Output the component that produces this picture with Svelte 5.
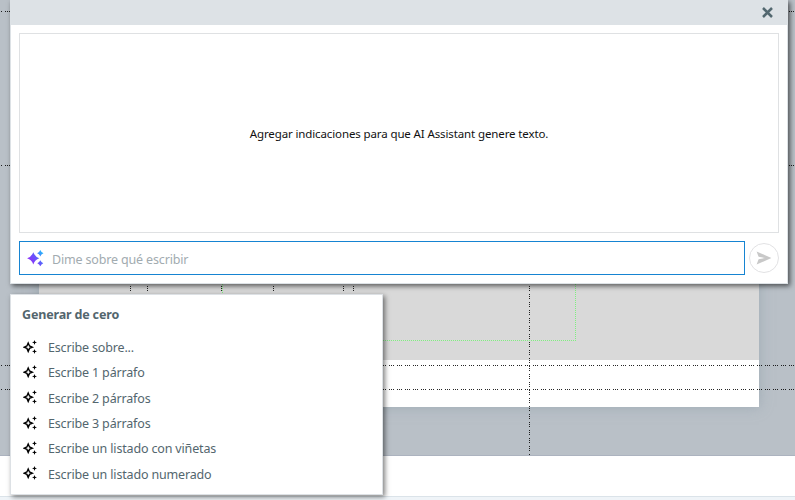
<script>
  const prompts = [
    'Escribe sobre...',
    'Escribe 1 párrafo',
    'Escribe 2 párrafos',
    'Escribe 3 párrafos',
    'Escribe un listado con viñetas',
    'Escribe un listado numerado'
  ];
  const rows = [11, 165, 365, 389];
  const columns = [130, 147, 221, 273, 343, 353];
</script>

<div class="app">
  <div class="workspace">
    <div class="page"><div class="band"></div></div>
    <div class="frame"></div>
    {#each rows as y}
      <div class="guide-h" style="top: {y}px"></div>
    {/each}
    {#each columns as x}
      <div class="guide-v short" style="left: {x}px"></div>
    {/each}
    <div class="guide-v" style="left: 529px"></div>
  </div>
  <div class="footer"></div>
  <div class="status"></div>

  <section class="dialog">
    <header>
      <svg width="11" height="11" viewBox="0 0 11 11"><path d="M1 1 10 10M10 1 1 10" stroke="#536870" stroke-width="2.5" /></svg>
    </header>
    <div class="body">
      <div class="result"><span>Agregar indicaciones para que AI Assistant genere texto.</span></div>
      <div class="entry">
        <div class="input">
          <svg width="17" height="17" viewBox="0 0 17 17">
            <defs>
              <linearGradient id="ai" gradientUnits="userSpaceOnUse" x1="2" y1="11" x2="15" y2="2">
                <stop offset="0" stop-color="#9030f8" />
                <stop offset=".5" stop-color="#6358fb" />
                <stop offset="1" stop-color="#28b4fb" />
              </linearGradient>
            </defs>
            <path fill="url(#ai)" d="M6.3 2.2Q7.9 6.7 12.3 8.3 7.9 9.9 6.3 14.4 4.7 9.9.1 8.3 4.7 6.7 6.3 2.2ZM13.3.1Q14.2 2.4 16.5 3.3 14.2 4.2 13.3 6.5 12.4 4.2 10.1 3.3 12.4 2.4 13.3.1ZM13.3 10.2Q14.2 12.3 16.3 13.2 14.2 14.1 13.3 16.2 12.4 14.1 10.3 13.2 12.4 12.3 13.3 10.2Z" />
          </svg>
          <span>Dime sobre qué escribir</span>
        </div>
        <div class="send">
          <svg width="16" height="14" viewBox="0 0 16 14"><path fill="#c8c8c8" d="M.6.5 15.4 7 .6 13.5 2.6 8.2 9 7 2.6 5.8Z" /></svg>
        </div>
      </div>
    </div>
  </section>

  <section class="menu">
    <h2>Generar de cero</h2>
    <ul>
      {#each prompts as prompt}
        <li>
          <svg width="14" height="14" viewBox="0 0 14 14">
            <path d="M5.2 3 6.5 6 9.3 7.2 6.5 8.4 5.2 11.4 3.9 8.4 1.1 7.2 3.9 6Z" fill="none" stroke="#000" stroke-width="1.4" />
            <path d="M11.5 0 12.2 1.7 14 2.4 12.2 3.1 11.5 4.9 10.8 3.1 9 2.4 10.8 1.7ZM11.5 8.9 12.2 10.7 14 11.4 12.2 12.1 11.5 13.9 10.8 12.1 9 11.4 10.8 10.7Z" />
          </svg>
          <span>{prompt}</span>
        </li>
      {/each}
    </ul>
  </section>
</div>

<style>
  .app {
    position: relative;
    width: 795px;
    height: 500px;
    overflow: hidden;
    display: flex;
    flex-direction: column;
    background: #fff;
    font-family: 'Noto Sans', 'Open Sans', sans-serif;
    font-size: 12.5px;
    letter-spacing: -.16px;
  }
  .app * { box-sizing: border-box; }
  svg { display: block; flex: none; }
  .workspace {
    position: relative;
    height: 456px;
    overflow: hidden;
    background: #b9c0c7;
    border-bottom: 1px solid #acb3bf;
  }
  .page {
    width: 720px;
    height: 407px;
    margin-left: 39px;
    background: #fff;
    box-shadow: 0 0 12px rgba(145, 160, 172, .65);
  }
  .band { height: 360px; background: #d9d9d9; }
  .frame {
    position: absolute;
    left: 222px;
    top: 100px;
    width: 354px;
    height: 241px;
    border: 1px dotted #80f080;
  }
  .guide-h, .guide-v { position: absolute; opacity: .85; }
  .guide-h {
    left: 0;
    width: 100%;
    height: 1px;
    background: repeating-linear-gradient(90deg, #000 0 1px, transparent 1px 2px, #000 2px 3px, transparent 3px 4px, #000 4px 5px, transparent 5px 8px) -3px 0 / 803px 1px no-repeat;
  }
  .guide-v {
    top: -2px;
    height: 458px;
    width: 1px;
    background: repeating-linear-gradient(180deg, #000 0 1px, transparent 1px 2px, #000 2px 3px, transparent 3px 4px, #000 4px 5px, transparent 5px 8px);
  }
  .short { height: 300px; }
  .footer { height: 40px; }
  .status { height: 4px; background: #eff4f8; border-top: 1px solid #dbe3e9; }

  .dialog {
    position: absolute;
    left: 10px;
    top: 0;
    width: 778px;
    height: 284px;
    background: #fff;
    border: 1px solid #dde2e6;
    border-top: 0;
    box-shadow: 2px 2px 5px rgba(0, 0, 0, .6);
  }
  header {
    height: 25px;
    display: flex;
    justify-content: flex-end;
    padding: 7px 14px 0 0;
    background: #dde2e6;
  }
  .body { padding: 8px; }
  .result {
    height: 200px;
    display: flex;
    align-items: center;
    justify-content: center;
    border: 1px solid #dfe1e3;
    color: #111;
    font-size: 11.5px;
    letter-spacing: -.12px;
  }
  .entry { display: flex; align-items: center; gap: 4px; margin-top: 8px; }
  .input {
    width: 726px;
    height: 34px;
    display: flex;
    align-items: center;
    gap: 8px;
    padding-left: 7px;
    border: 1px solid #1684d2;
    color: #a2abb0;
  }
  .input span { padding-top: 2px; }
  .send {
    width: 30px;
    height: 30px;
    display: flex;
    align-items: center;
    justify-content: center;
    border: 1px solid #e2e2e4;
    border-radius: 50%;
  }
  .menu {
    position: absolute;
    left: 10px;
    top: 294px;
    width: 373px;
    height: 201px;
    padding: 11px 11px 0;
    background: #fff;
    border: 1px solid #dde1e5;
    box-shadow: 2px 2px 5px rgba(0, 0, 0, .5);
    color: #53666e;
  }
  h2 { margin: 0; font-size: 12.5px; font-weight: 700; line-height: 18px; }
  ul { margin: 10px 0 0; padding: 0 0 0 1px; list-style: none; }
  li { display: flex; align-items: center; gap: 11px; height: 25.3px; }
  li span { padding-top: 2px; }
</style>
